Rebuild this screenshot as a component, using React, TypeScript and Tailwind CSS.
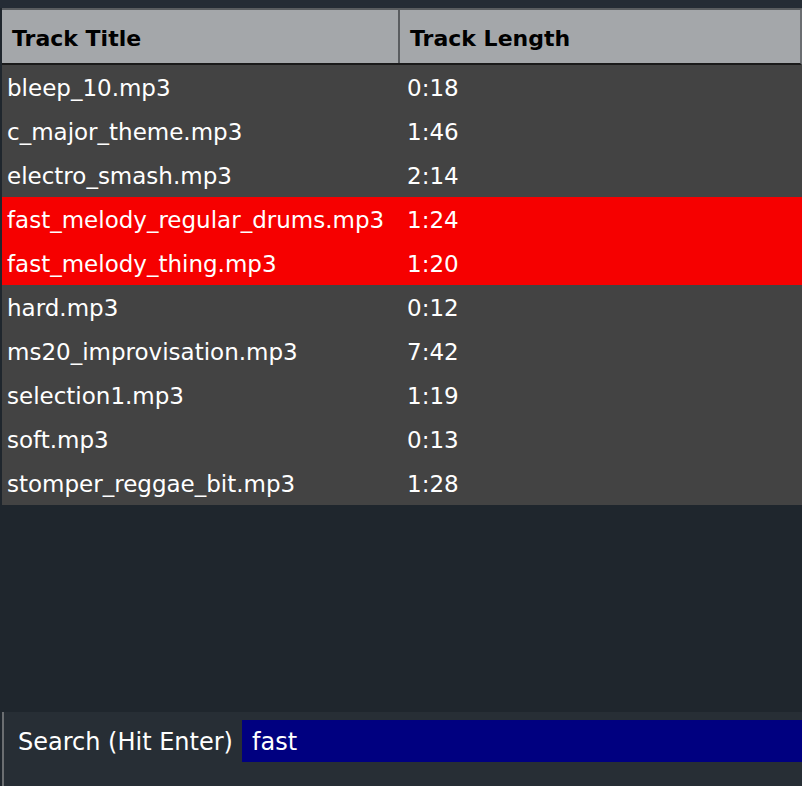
import React from "react"

const tracks = [
  { title: "bleep_10.mp3", length: "0:18" },
  { title: "c_major_theme.mp3", length: "1:46" },
  { title: "electro_smash.mp3", length: "2:14" },
  { title: "fast_melody_regular_drums.mp3", length: "1:24", hit: true },
  { title: "fast_melody_thing.mp3", length: "1:20", hit: true },
  { title: "hard.mp3", length: "0:12" },
  { title: "ms20_improvisation.mp3", length: "7:42" },
  { title: "selection1.mp3", length: "1:19" },
  { title: "soft.mp3", length: "0:13" },
  { title: "stomper_reggae_bit.mp3", length: "1:28" },
]

export default function App() {
  return (
    <div
      className="w-[802px] h-[786px] bg-[#1f262d] flex flex-col overflow-hidden text-white"
      style={{ fontFamily: '"DejaVu Sans", "Noto Sans", sans-serif' }}
    >
      <div className="h-[8px] bg-[#252c35]" />
      <div className="flex-1 flex pl-[2px]">
        <div className="flex-1 flex flex-col">
          {/* header */}
          <div className="flex h-[57px] bg-[#a4a7aa] border-t-2 border-[#5a5d60] border-b-2 border-b-[#1a1a1a] border-r-2 border-r-[#6b6e71] text-black font-bold text-[22px]">
            <div className="w-[398px] flex items-center pl-[10px] pt-[4px] border-r-2 border-[#5a5d60]">Track Title</div>
            <div className="flex-1 flex items-center pl-[10px] pt-[4px]">Track Length</div>
          </div>
          {/* rows */}
          <div className="flex flex-col">
            {tracks.map((t) => (
              <div
                key={t.title}
                className={`flex h-[44px] items-center pt-[3px] text-[23px] ${t.hit ? "bg-[#f60000]" : "bg-[#434343]"}`}
              >
                <div className="w-[400px] pl-[5px] whitespace-nowrap">{t.title}</div>
                <div className="flex-1 pl-[5px]">{t.length}</div>
              </div>
            ))}
          </div>
        </div>
      </div>
      {/* search bar */}
      <div className="h-[74px] bg-[#272e35] ml-[2px] border-l-2 border-[#6b6e71] flex items-start pt-[8px]">
        <div className="flex items-center h-[42px] w-full">
          <span className="w-[238px] pl-[14px] pt-[2px] text-[24px] whitespace-nowrap">Search (Hit Enter)</span>
          <div className="flex-1 h-full bg-[#000080] flex items-center pl-[10px] pt-[2px] text-[24px]">fast</div>
        </div>
      </div>
    </div>
  )
}
